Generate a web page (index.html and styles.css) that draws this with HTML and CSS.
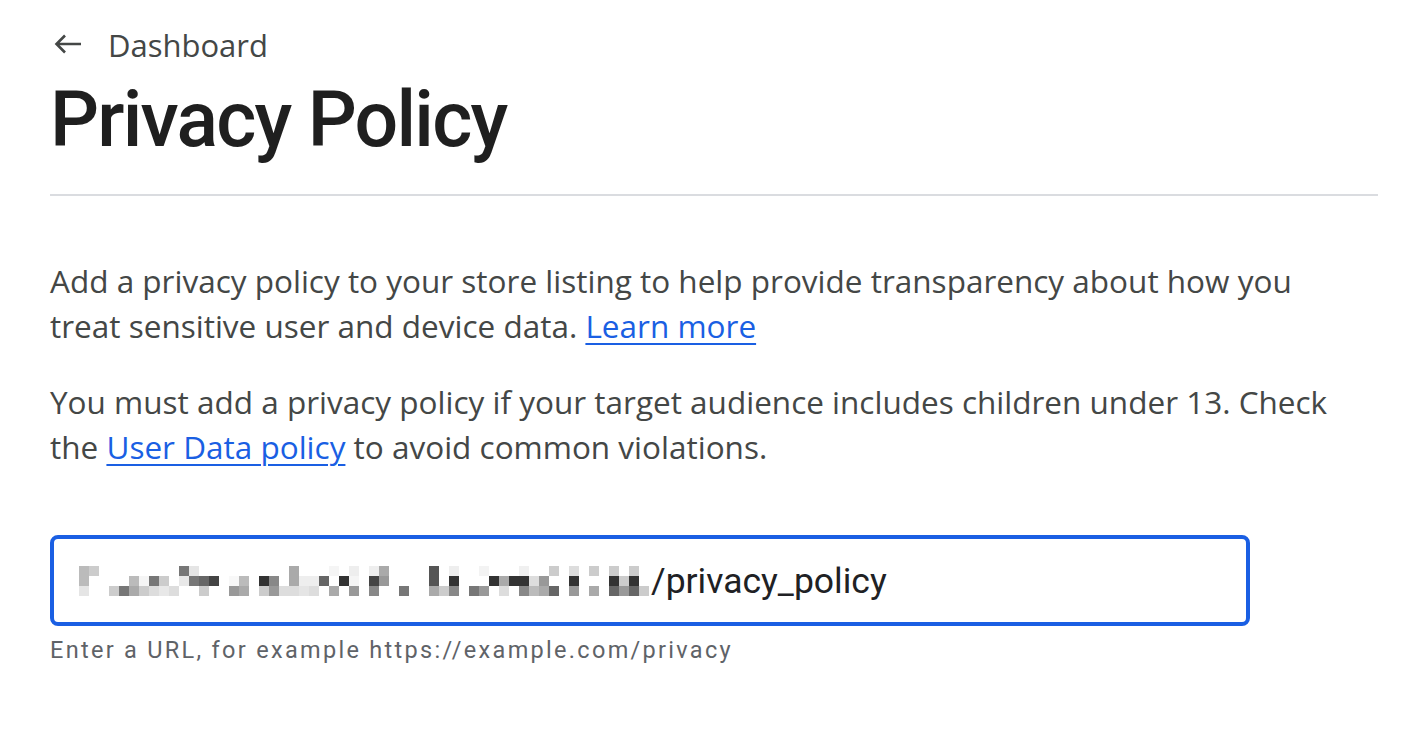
FILE: index.html
```html
<!DOCTYPE html>
<html lang="en">
<head>
<meta charset="utf-8">
<title>Privacy Policy</title>
<link rel="stylesheet" href="styles.css">
</head>
<body>
<main class="page">
  <a class="back" href="#">
    <svg class="back-icon" viewBox="0 0 28 20" width="28" height="20" aria-hidden="true"><path d="M27 10H2.5M11 1.5L2.5 10L11 18.5" fill="none" stroke="#444746" stroke-width="2.6" stroke-linecap="butt" stroke-linejoin="miter"/></svg>
    <span class="back-label">Dashboard</span>
  </a>
  <h1 class="title">Privacy Policy</h1>
  <hr class="divider">
  <p class="para">Add a privacy policy to your store listing to help provide transparency about how you treat sensitive user and device data. <a class="link" href="#">Learn more</a></p>
  <p class="para">You must add a privacy policy if your target audience includes children under 13. Check the <a class="link" href="#">User Data policy</a> to avoid common violations.</p>
  <div class="field">
    <div class="input">
      <svg class="mosaic" width="570" height="30" viewBox="0 0 570 30" aria-hidden="true">
        <g>
          <rect x="0" y="0" width="10" height="10" fill="#bbb"/>
          <rect x="10" y="0" width="10" height="10" fill="#ccc"/>
          <rect x="100" y="0" width="10" height="10" fill="#777"/>
          <rect x="110" y="0" width="10" height="10" fill="#e5e5e5"/>
          <rect x="210" y="0" width="10" height="10" fill="#aaa"/>
          <rect x="250" y="0" width="10" height="10" fill="#f5f5f5"/>
          <rect x="270" y="0" width="10" height="10" fill="#eee"/>
          <rect x="290" y="0" width="10" height="10" fill="#eee"/>
          <rect x="300" y="0" width="10" height="10" fill="#aaa"/>
          <rect x="350" y="0" width="10" height="10" fill="#555"/>
          <rect x="370" y="0" width="10" height="10" fill="#eee"/>
          <rect x="400" y="0" width="10" height="10" fill="#f3f3f3"/>
          <rect x="440" y="0" width="10" height="10" fill="#f0f0f0"/>
          <rect x="470" y="0" width="10" height="10" fill="#ccc"/>
          <rect x="490" y="0" width="10" height="10" fill="#ddd"/>
          <rect x="510" y="0" width="10" height="10" fill="#ccc"/>
          <rect x="530" y="0" width="10" height="10" fill="#ccc"/>
          <rect x="550" y="0" width="10" height="10" fill="#ccc"/>
        </g>
        <g>
          <rect x="0" y="10" width="10" height="10" fill="#bbb"/>
          <rect x="50" y="10" width="10" height="10" fill="#bbb"/>
          <rect x="60" y="10" width="10" height="10" fill="#f5f5f5"/>
          <rect x="70" y="10" width="10" height="10" fill="#777"/>
          <rect x="80" y="10" width="10" height="10" fill="#ccc"/>
          <rect x="100" y="10" width="10" height="10" fill="#e8e8e8"/>
          <rect x="110" y="10" width="10" height="10" fill="#777"/>
          <rect x="120" y="10" width="10" height="10" fill="#666"/>
          <rect x="130" y="10" width="10" height="10" fill="#444"/>
          <rect x="150" y="10" width="10" height="10" fill="#f8f8f8"/>
          <rect x="160" y="10" width="10" height="10" fill="#bbb"/>
          <rect x="180" y="10" width="10" height="10" fill="#333"/>
          <rect x="190" y="10" width="10" height="10" fill="#888"/>
          <rect x="210" y="10" width="10" height="10" fill="#aaa"/>
          <rect x="220" y="10" width="10" height="10" fill="#eee"/>
          <rect x="230" y="10" width="10" height="10" fill="#eee"/>
          <rect x="240" y="10" width="10" height="10" fill="#666"/>
          <rect x="260" y="10" width="10" height="10" fill="#333"/>
          <rect x="270" y="10" width="10" height="10" fill="#f5f5f5"/>
          <rect x="290" y="10" width="10" height="10" fill="#444"/>
          <rect x="300" y="10" width="10" height="10" fill="#999"/>
          <rect x="350" y="10" width="10" height="10" fill="#555"/>
          <rect x="370" y="10" width="10" height="10" fill="#333"/>
          <rect x="410" y="10" width="10" height="10" fill="#333"/>
          <rect x="420" y="10" width="10" height="10" fill="#aaa"/>
          <rect x="430" y="10" width="10" height="10" fill="#333"/>
          <rect x="440" y="10" width="10" height="10" fill="#333"/>
          <rect x="450" y="10" width="10" height="10" fill="#ddd"/>
          <rect x="460" y="10" width="10" height="10" fill="#999"/>
          <rect x="490" y="10" width="10" height="10" fill="#333"/>
          <rect x="530" y="10" width="10" height="10" fill="#333"/>
          <rect x="540" y="10" width="10" height="10" fill="#ccc"/>
          <rect x="550" y="10" width="10" height="10" fill="#333"/>
        </g>
        <g>
          <rect x="0" y="20" width="10" height="10" fill="#e5e5e5"/>
          <rect x="30" y="20" width="10" height="10" fill="#ccc"/>
          <rect x="40" y="20" width="10" height="10" fill="#777"/>
          <rect x="50" y="20" width="10" height="10" fill="#aaa"/>
          <rect x="60" y="20" width="10" height="10" fill="#ccc"/>
          <rect x="70" y="20" width="10" height="10" fill="#ddd"/>
          <rect x="80" y="20" width="10" height="10" fill="#e8e8e8"/>
          <rect x="90" y="20" width="10" height="10" fill="#ddd"/>
          <rect x="120" y="20" width="10" height="10" fill="#ccc"/>
          <rect x="150" y="20" width="10" height="10" fill="#999"/>
          <rect x="160" y="20" width="10" height="10" fill="#aaa"/>
          <rect x="180" y="20" width="10" height="10" fill="#ccc"/>
          <rect x="190" y="20" width="10" height="10" fill="#999"/>
          <rect x="200" y="20" width="10" height="10" fill="#ddd"/>
          <rect x="210" y="20" width="10" height="10" fill="#ddd"/>
          <rect x="220" y="20" width="10" height="10" fill="#e5e5e5"/>
          <rect x="230" y="20" width="10" height="10" fill="#ddd"/>
          <rect x="250" y="20" width="10" height="10" fill="#aaa"/>
          <rect x="270" y="20" width="10" height="10" fill="#999"/>
          <rect x="290" y="20" width="10" height="10" fill="#888"/>
          <rect x="320" y="20" width="10" height="10" fill="#777"/>
          <rect x="350" y="20" width="10" height="10" fill="#aaa"/>
          <rect x="360" y="20" width="10" height="10" fill="#ccc"/>
          <rect x="370" y="20" width="10" height="10" fill="#888"/>
          <rect x="390" y="20" width="10" height="10" fill="#777"/>
          <rect x="400" y="20" width="10" height="10" fill="#999"/>
          <rect x="420" y="20" width="10" height="10" fill="#ddd"/>
          <rect x="440" y="20" width="10" height="10" fill="#888"/>
          <rect x="450" y="20" width="10" height="10" fill="#bbb"/>
          <rect x="460" y="20" width="10" height="10" fill="#aaa"/>
          <rect x="470" y="20" width="10" height="10" fill="#666"/>
          <rect x="490" y="20" width="10" height="10" fill="#999"/>
          <rect x="510" y="20" width="10" height="10" fill="#aaa"/>
          <rect x="530" y="20" width="10" height="10" fill="#666"/>
          <rect x="540" y="20" width="10" height="10" fill="#999"/>
          <rect x="550" y="20" width="10" height="10" fill="#666"/>
          <rect x="560" y="20" width="10" height="10" fill="#ccc"/>
        </g>
      </svg>
      <span class="input-text">/privacy_policy</span>
    </div>
    <div class="helper">Enter a URL, for example https://example.com/privacy</div>
  </div>
</main>
</body>
</html>
```

FILE: styles.css
```css
html, body {
  margin: 0;
  padding: 0;
  background: #ffffff;
}

body {
  font-family: "Open Sans", Roboto, "Liberation Sans", Arial, sans-serif;
  color: #444746;
}

.page {
  padding: 21px 24px 0 50px;
}

.back {
  display: flex;
  align-items: center;
  gap: 26px;
  height: 48px;
  text-decoration: none;
  color: #444746;
  padding-left: 4px;
}

.back-icon {
  flex: none;
  display: block;
  margin-top: -2px;
}

.back-label {
  font-family: "Open Sans", Roboto, sans-serif;
  font-size: 31px;
  line-height: 48px;
  color: #444746;
}

.title {
  margin: 3px 0 0 0;
  font-family: Roboto, "Open Sans", sans-serif;
  font-size: 77px;
  line-height: 96px;
  font-weight: 500;
  color: #1f1f1f;
  letter-spacing: -1.8px;
}

.divider {
  border: none;
  height: 2px;
  background: #dadce0;
  margin: 26px 0 0 0;
}

.para {
  margin: 62px 0 0 0;
  max-width: 1292px;
  font-size: 31.5px;
  line-height: 45px;
  color: #444746;
}

.para + .para {
  margin-top: 31px;
}

.link {
  color: #1a5fe3;
  text-decoration: underline;
  text-underline-offset: 5px;
  text-decoration-thickness: 2px;
}

.field {
  margin-top: 66px;
  width: 1200px;
}

.input {
  display: flex;
  align-items: center;
  height: 83px;
  border: 4px solid #1a5fe3;
  border-radius: 8px;
  padding-left: 25px;
}

.mosaic {
  display: block;
  flex: none;
}

.input-text {
  font-family: Roboto, "Open Sans", sans-serif;
  font-size: 35.5px;
  color: #202124;
  line-height: 40px;
  margin-left: 2px;
}

.helper {
  margin-top: 9px;
  font-family: Roboto, "Open Sans", sans-serif;
  font-size: 23.5px;
  line-height: 30px;
  color: #5f6368;
  letter-spacing: 2.3px;
}
```
